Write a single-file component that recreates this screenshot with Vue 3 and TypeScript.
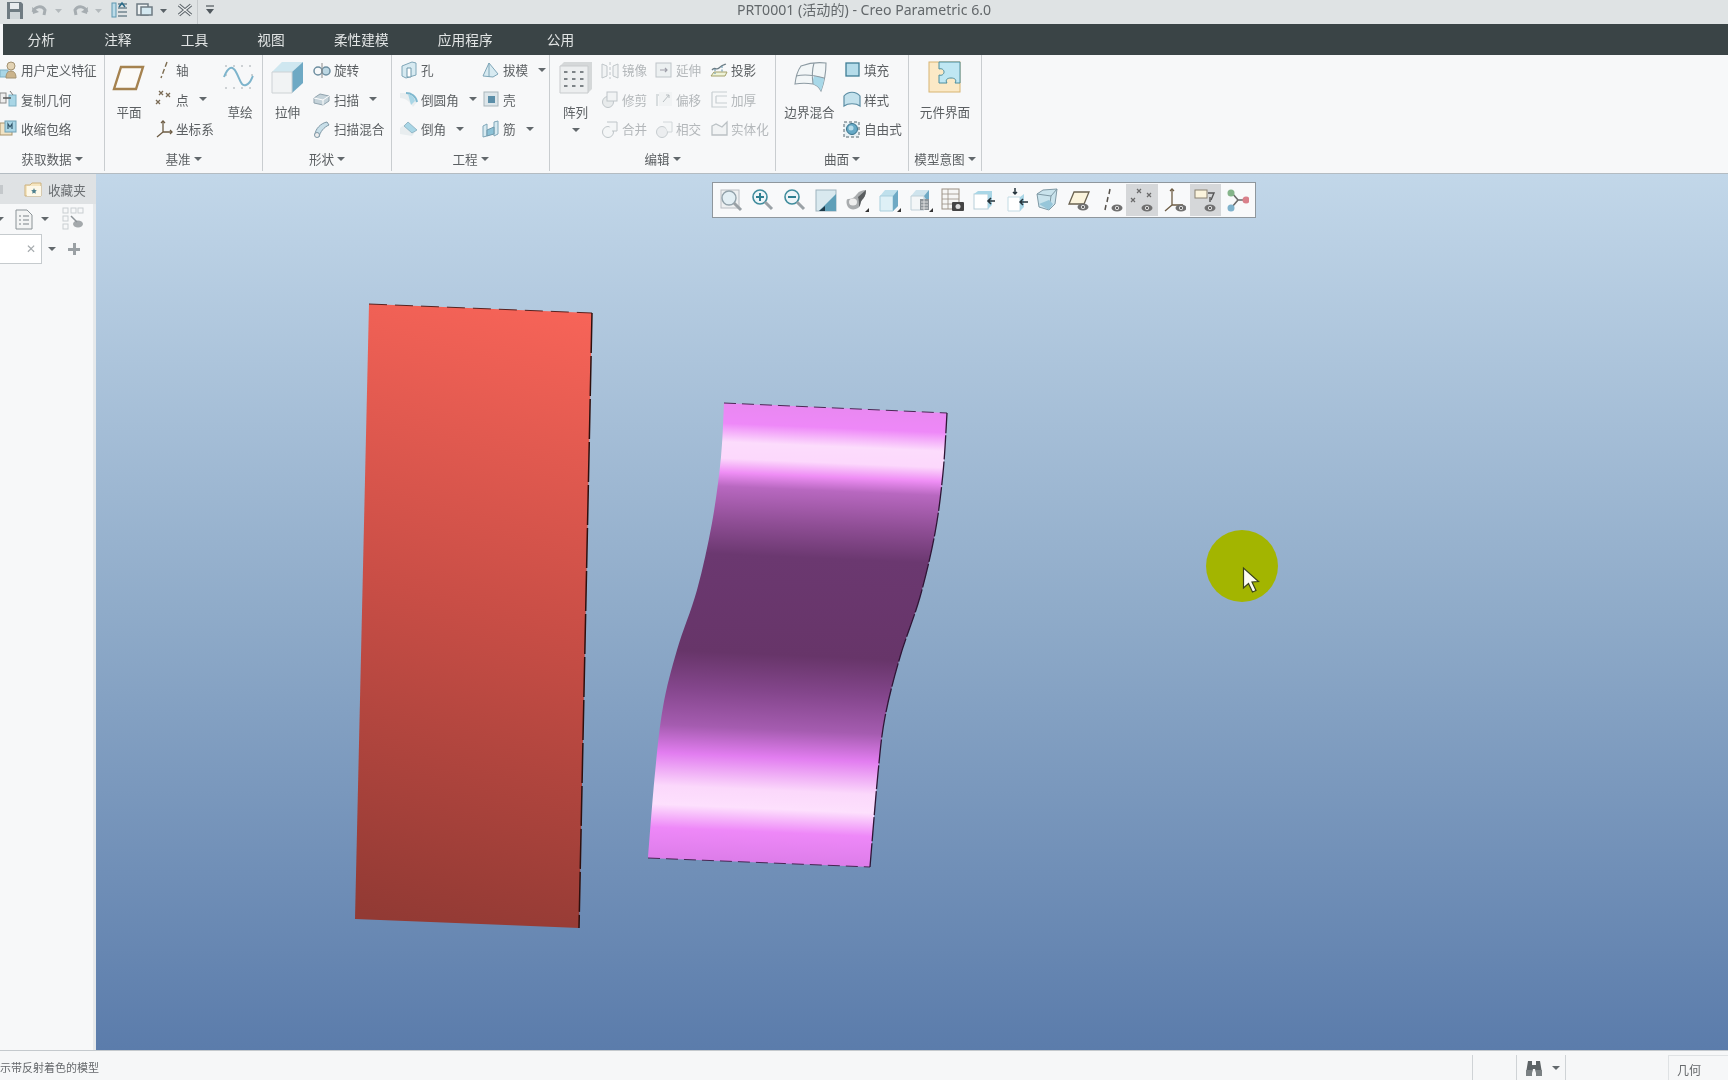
<script setup lang="ts">
interface Item {
  icon: string;
  label: string;
  caret?: boolean;
  off?: boolean;
}
interface Col {
  w: number;
  pad?: number;
  large?: Item;
  below?: boolean;
  rows?: Item[];
}
interface Group {
  label: string;
  w: number;
  cols: Col[];
}

const small: Record<string, string> = {
  user: `<rect x="0" y="9" width="8" height="7" fill="#a9d6e6" stroke="#7fb0c4"/><circle cx="11" cy="5" r="4" fill="#e3d3b4" stroke="#a39272"/><path d="M6 17c0-5 2-7 5-7s5 2 5 7z" fill="#cbb48c" stroke="#a39272"/>`,
  copy: `<rect x="0" y="3" width="6" height="10" fill="#eee" stroke="#888"/><rect x="9" y="5" width="7" height="11" fill="#a9d6e6" stroke="#7fb0c4"/><path d="M3 8h8" stroke="#555" stroke-width="1.5"/><path d="M10 1l3 4" stroke="#777"/>`,
  shrink: `<rect x="0" y="3" width="12" height="12" fill="#f1e3c4" stroke="#a8936c"/><rect x="5" y="1" width="11" height="11" fill="#a9d6e6" stroke="#6e9fb4"/><path d="M8 9V4l2 3 2-3v5" fill="none" stroke="#33566a" stroke-width="1.2"/>`,
  axis: `<path d="M12 1L6 17" stroke="#7d6c50" stroke-width="1.4" stroke-dasharray="5 2.5" fill="none"/>`,
  point: `<g stroke="#7a6b55" stroke-width="1.3"><path d="M4 1l4 4M8 1L4 5M11 3l4 4M15 3l-4 4M1 10l4 4M5 10l-4 4"/></g>`,
  csys: `<g stroke="#6d5c44" stroke-width="1.3" fill="none"><path d="M8 1v11M8 12h9M8 12l-6 5"/><path d="M6 3l2-2 2 2M15 10l2 2-2 2"/></g>`,
  revolve: `<circle cx="5" cy="10" r="4" fill="none" stroke="#6d8ea0" stroke-width="1.5"/><circle cx="13" cy="10" r="4" fill="#bcd7e3" stroke="#6d8ea0" stroke-width="1.5"/><path d="M9 2v15" stroke="#8a8a8a"/>`,
  sweep: `<path d="M1 8l6-4 9 2v5l-6 4-9-2z" fill="#c5d3da" stroke="#90a3ae"/><path d="M1 8l9 2 6-4M10 10v5" fill="none" stroke="#fff"/>`,
  sblend: `<path d="M2 15c0-6 6-12 12-13l2 3c-5 2-9 7-10 12z" fill="#c8dfe9" stroke="#7f98a6"/><ellipse cx="4" cy="15" rx="2.5" ry="2.5" fill="#eee" stroke="#7f98a6"/>`,
  hole: `<path d="M2 5l10-4 4 1v12l-10 3-4-2z" fill="#d7eaf1" stroke="#7fa6b8"/><path d="M7 7h4v9H7z" fill="#fff" stroke="#6f98ab"/>`,
  round: `<path d="M0 3h8c5 0 9 4 9 9l-4 5c-2-4-7-9-13-9z" fill="#e8edef"/><path d="M6 3c5 0 10 3 11 9" fill="none" stroke="#7fb8cf" stroke-width="2"/><path d="M8 4c4 1 6 3 7 7l-4 4" fill="#a9d6e6"/>`,
  chamfer: `<path d="M0 8l8-6 9 8-5 6-12-2z" fill="#e8edef"/><path d="M8 2l9 8-5 3-8-7z" fill="#a9d6e6" stroke="#7fa6b8" stroke-width=".7"/>`,
  draft: `<path d="M1 15l6-13 9 11-5 3z" fill="#d7eaf1" stroke="#7fa6b8"/><path d="M7 2v14" stroke="#7fa6b8"/>`,
  shell: `<rect x="2" y="2" width="14" height="14" fill="#dde6ea" stroke="#a9b6bc"/><rect x="6" y="6" width="7" height="7" fill="#5b8ea8"/>`,
  rib: `<path d="M1 6l4-2v12l-4 1zM12 2l4-1v13l-4 2z" fill="#d7eaf1" stroke="#7fa6b8"/><path d="M5 10l7-3v7l-7 2z" fill="#8cc1d6" stroke="#6f98ab"/>`,
  mirror: `<path d="M1 3l5 2v10l-5 2zM17 3l-5 2v10l5 2z" fill="#eef1f2" stroke="#9aa4a9"/><path d="M9 1v17" stroke="#9aa4a9" stroke-dasharray="3 2"/>`,
  trim: `<circle cx="7" cy="12" r="5.5" fill="#dfe3e5" stroke="#9aa4a9"/><rect x="6" y="2" width="10" height="9" fill="#eef1f2" stroke="#9aa4a9"/>`,
  merge: `<circle cx="7" cy="12" r="5.5" fill="#f3f5f6" stroke="#9aa4a9"/><path d="M6 2h10v9H11" fill="#f3f5f6" stroke="#9aa4a9"/>`,
  extend: `<rect x="1" y="2" width="15" height="14" fill="#e6ebed" stroke="#9aa4a9"/><path d="M5 9h7M10 7l2 2-2 2" fill="none" stroke="#667" stroke-width="1.2"/>`,
  offset: `<path d="M2 16V5h13" fill="none" stroke="#c4cccf" stroke-width="2"/><rect x="4" y="2" width="13" height="14" fill="#eef1f2"/><path d="M8 12l6-7M11 5h3v3" fill="none" stroke="#8d979c"/>`,
  intersect: `<circle cx="7" cy="12" r="5.5" fill="#e4e7e9" stroke="#a5aeb3"/><path d="M8 2h9v10h-4" fill="#f3f5f6" stroke="#bac2c6"/>`,
  project: `<path d="M1 15h14l2-4H4z" fill="#eef3d8" stroke="#a3a06a"/><path d="M2 9c3-4 4 1 7-2s4-3 7-4" fill="none" stroke="#6a7b84" stroke-width="1.3"/><path d="M5 8v5M12 5v7" stroke="#5b8ea8" stroke-dasharray="2 1.5"/>`,
  thicken: `<path d="M2 2h15M2 2v15h15" fill="none" stroke="#a9b3b8" stroke-width="1.2"/><path d="M6 6h11M6 6v7h11" fill="none" stroke="#a9b3b8" stroke-width="1.2"/>`,
  solidify: `<path d="M2 6l4-2 6 3 5-5v13H2z" fill="#eef1f2" stroke="#929ca1" stroke-width="1.3"/>`,
  fill: `<rect x="3" y="2" width="13" height="13" fill="#b5dcea" stroke="#3f7d96" stroke-width="1.3"/>`,
  style: `<path d="M1 16V6c4-5 12-5 16 0v10c-4-3-12-3-16 0z" fill="#c3e1ec" stroke="#5a8ca3" stroke-width="1.2"/>`,
  free: `<rect x="1" y="2" width="15" height="15" fill="#e9f1f4" stroke="#55676f" stroke-dasharray="3 2"/><circle cx="9" cy="9" r="5.5" fill="#66a9c6" stroke="#37718a"/><circle cx="8" cy="8" r="2.5" fill="#b6dcea"/>`
};

const large: Record<string, string> = {
  plane: `<path d="M9 6h22l-7 22H2z" fill="#fbfaf7" stroke="#a5824f" stroke-width="2.4"/>`,
  sketch: `<g fill="#9aa0a4"><circle cx="3" cy="5" r=".8"/><circle cx="11" cy="5" r=".8"/><circle cx="19" cy="5" r=".8"/><circle cx="27" cy="5" r=".8"/><circle cx="3" cy="14" r=".8"/><circle cx="29" cy="14" r=".8"/><circle cx="3" cy="27" r=".8"/><circle cx="11" cy="27" r=".8"/><circle cx="19" cy="27" r=".8"/><circle cx="27" cy="27" r=".8"/></g><path d="M1 16C5 6 9 4 13 11s5 15 10 13 5-6 7-9" fill="none" stroke="#7db4cc" stroke-width="2"/>`,
  extrude: `<path d="M1 11L11 1h21v21L21 32H1z" fill="#eef1f2"/><path d="M1 11L11 1h21L21 11z" fill="#cfe7f0"/><path d="M21 11L32 1v21L21 32z" fill="#6ea9c4"/><path d="M1 11h20v21H1z" fill="#f1f3f4" stroke="#cdd2d5"/>`,
  pattern: `<path d="M1 5L5 1h28v27l-4 4H1z" fill="#d5d8d9"/><path d="M1 5h28v27H1z" fill="#eceeef" stroke="#c8cbcd"/><g fill="#7d8387"><rect x="5" y="10" width="3.5" height="2"/><rect x="13" y="10" width="3.5" height="2"/><rect x="21" y="10" width="3.5" height="2"/><rect x="5" y="17" width="3.5" height="2"/><rect x="13" y="17" width="3.5" height="2"/><rect x="21" y="17" width="3.5" height="2"/><rect x="5" y="24" width="3.5" height="2"/><rect x="13" y="24" width="3.5" height="2"/><rect x="21" y="24" width="3.5" height="2"/></g>`,
  boundary: `<path d="M2 23C3 14 5 9 8 5C16 2 25 1 33 2C33 12 31 22 28 30C26 26 24 24 20 23C14 22 8 22 2 23Z" fill="#f2f6f7" stroke="#8c9aa2" stroke-width="1.1"/><path d="M21 15C24 15.500 28 16 31 17C31 22 29 26 28 30C26 26 24 24 20 23C19.500 20 20 18 21 15Z" fill="#a8d8e8"/><path d="M3 15C12 13 24 15 31 17M21 2C19 9 19 16 20 23" fill="none" stroke="#8c9aa2" stroke-width="1.1"/>`,
  iface: `<rect x="1" y="1" width="31" height="30" fill="#fbe9c6" stroke="#d7b473"/><path d="M11 1H32V22H27c2-3 0-5-4-5s-6 2-4 5H11V14c3 1 5-1 5-3s-2-4-5-3z" fill="#bfe7f3" stroke="#4d8e9e"/>`
};

const eye = `<ellipse cx="16" cy="19" rx="5.5" ry="3.5" fill="#707070"/><circle cx="16" cy="19" r="2" fill="#eee"/><circle cx="16" cy="19" r="1" fill="#333"/>`;
const corner = `<path d="M24 24h-4l4-4z" fill="#333"/>`;
const mag = (inner: string) =>
  `<circle cx="10" cy="9" r="7" fill="#eef5f8" stroke="#3f8c9c" stroke-width="1.6"/>${inner}<path d="M15 14l7 7" stroke="#9aa1a6" stroke-width="3"/>`;

const tools: { svg: string; on?: boolean }[] = [
  { svg: `<rect x="2" y="2" width="18" height="18" fill="#eef0f1" stroke="#b9bec2"/><circle cx="10" cy="10" r="7" fill="#e3eff4" stroke="#93a3ab" stroke-width="1.4"/><path d="M15 15l7 7" stroke="#9aa1a6" stroke-width="3"/>` },
  { svg: mag(`<path d="M6 9h8M10 5v8" stroke="#2e7f90" stroke-width="2"/>`) },
  { svg: mag(`<path d="M6 9h8" stroke="#2e7f90" stroke-width="2"/>`) },
  { svg: `<rect x="2" y="2" width="20" height="21" fill="#d9e9ef" stroke="#9db3bd"/><path d="M22 6v17H5z" fill="#5f9fb8"/><path d="M5 23l6-5v5z" fill="#1f3a48"/>` },
  { svg: `<path d="M3 11c4 0 7-2 9-5s6-4 9-4c0 5-2 8-4 10s-1 6-4 8-8 2-10-1-2-8 0-8z" fill="#a9acae"/><path d="M13 9l8-7c0 5-2 8-4 10s-1 5-3 7c0-4 0-7-1-10z" fill="#5a5d5f"/><ellipse cx="8" cy="14" rx="4" ry="3.500" fill="#eeeeee"/>${corner}` },
  { svg: `<path d="M3 8l5-6h13v16l-5 5H3z" fill="#bfe0ec"/><path d="M3 8h13v15H3z" fill="#def0f6" stroke="#a9cfdd"/><path d="M16 8l5-6v16l-5 5z" fill="#6ea9c4"/>${corner}` },
  { svg: `<path d="M2 8l5-6h13v14H2z" fill="#cfe4ed"/><path d="M2 8h13v14H2z" fill="#f3f6f7" stroke="#bfd0d8"/><path d="M15 8l5-6v14z" fill="#6ea9c4"/><rect x="11" y="11" width="9" height="11" fill="#8d9499"/><path d="M12 14h7M12 17h7M12 20h7M15 11v11" stroke="#eee" stroke-width=".8"/>${corner}` },
  { svg: `<rect x="2" y="1" width="17" height="20" fill="#f6f6f5" stroke="#9a9083"/><path d="M2 6h17M2 11h17M2 16h17M8 1v20" stroke="#9a9083" stroke-width=".8"/><rect x="12" y="14" width="12" height="9" rx="1" fill="#444"/><circle cx="18" cy="18.500" r="2.500" fill="#ddd"/>` },
  { svg: `<rect x="2" y="6" width="14" height="15" fill="#fff" stroke="#b7cfd9"/><path d="M2 6l4-3h14l-4 3zM16 6l4-3v14l-4 4z" fill="#a9d6e6"/><path d="M23 13h-7M19 10l-3 3 3 3" fill="none" stroke="#26343c" stroke-width="1.6"/>` },
  { svg: `<path d="M4 9h12v14H4z" fill="#fff" stroke="#c3dbe4"/><path d="M16 9l4-3v13l-4 4z" fill="#a9d6e6"/><path d="M11 0v6M9 4l2 2 2-2M24 14h-8M19 11l-3 3 3 3" fill="none" stroke="#26343c" stroke-width="1.5"/>` },
  { svg: `<path d="M2 6l6-4 14-1-2 15-6 6-10-3z" fill="#c9e3ec" stroke="#7f99a5"/><path d="M2 6l14 2 6-7M16 8l-2 14" fill="none" stroke="#7f99a5"/><path d="M4 16l10-4 4 4-4 6z" fill="#97c6d9"/>` },
  { svg: `<path d="M7 4h15l-5 12H2z" fill="#fbf4dd" stroke="#6a6250" stroke-width="1.3"/>${eye}` },
  { svg: `<path d="M11 1l-1 5M9 9l-1 5M7 17l-1 5" stroke="#55504a" stroke-width="1.5"/><g transform="translate(2,1)">${eye}</g>` },
  { on: true, svg: `<g stroke="#6a6a6a" stroke-width="1.2"><path d="M7 1l4 4M11 1L7 5M17 5l4 4M21 5l-4 4M1 10l4 4M5 10l-4 4"/></g><g transform="translate(1,1)">${eye}</g>` },
  { svg: `<g stroke="#6d5c44" stroke-width="1.3" fill="none"><path d="M10 1v16M10 17h11M10 17l-7 6"/><path d="M8 3l2-2 2 2"/></g><g transform="translate(3,1)">${eye}</g>` },
  { on: true, svg: `<rect x="2" y="2" width="12" height="8" fill="#fbf4dd" stroke="#8a8272"/><path d="M15 5h6l-3 7" fill="none" stroke="#555" stroke-width="1.4"/><path d="M17 9v5" stroke="#555" stroke-width="1.4"/><g transform="translate(1,1)">${eye}</g>` },
  { svg: `<path d="M7 5l6 7 9 0M13 12l-6 7" stroke="#6a6a6a" stroke-width="1.6" fill="none"/><circle cx="6" cy="5" r="3.500" fill="#85b48a"/><circle cx="6" cy="20" r="3.500" fill="#7fb2cc"/><circle cx="21" cy="12" r="3.500" fill="#d9808a"/>` }
];

const groups: Group[] = [
  {
    label: "获取数据",
    w: 105,
    cols: [
      {
        w: 104,
        rows: [
          { icon: "user", label: "用户定义特征" },
          { icon: "copy", label: "复制几何" },
          { icon: "shrink", label: "收缩包络" }
        ]
      }
    ]
  },
  {
    label: "基准",
    w: 158,
    cols: [
      { w: 48, large: { icon: "plane", label: "平面" } },
      {
        w: 67,
        pad: 2,
        rows: [
          { icon: "axis", label: "轴" },
          { icon: "point", label: "点", caret: true },
          { icon: "csys", label: "坐标系" }
        ]
      },
      { w: 40, large: { icon: "sketch", label: "草绘" } }
    ]
  },
  {
    label: "形状",
    w: 129,
    cols: [
      { w: 49, large: { icon: "extrude", label: "拉伸" } },
      {
        w: 79,
        pad: 1,
        rows: [
          { icon: "revolve", label: "旋转" },
          { icon: "sweep", label: "扫描", caret: true },
          { icon: "sblend", label: "扫描混合" }
        ]
      }
    ]
  },
  {
    label: "工程",
    w: 158,
    cols: [
      {
        w: 90,
        pad: 8,
        rows: [
          { icon: "hole", label: "孔" },
          { icon: "round", label: "倒圆角", caret: true },
          { icon: "chamfer", label: "倒角", caret: true }
        ]
      },
      {
        w: 67,
        rows: [
          { icon: "draft", label: "拔模", caret: true },
          { icon: "shell", label: "壳" },
          { icon: "rib", label: "筋", caret: true }
        ]
      }
    ]
  },
  {
    label: "编辑",
    w: 226,
    cols: [
      { w: 51, below: true, large: { icon: "pattern", label: "阵列" } },
      {
        w: 54,
        rows: [
          { icon: "mirror", label: "镜像", off: true },
          { icon: "trim", label: "修剪", off: true },
          { icon: "merge", label: "合并", off: true }
        ]
      },
      {
        w: 55,
        rows: [
          { icon: "extend", label: "延伸", off: true },
          { icon: "offset", label: "偏移", off: true },
          { icon: "intersect", label: "相交", off: true }
        ]
      },
      {
        w: 65,
        rows: [
          { icon: "project", label: "投影" },
          { icon: "thicken", label: "加厚", off: true },
          { icon: "solidify", label: "实体化", off: true }
        ]
      }
    ]
  },
  {
    label: "曲面",
    w: 133,
    cols: [
      { w: 67, large: { icon: "boundary", label: "边界混合" } },
      {
        w: 65,
        rows: [
          { icon: "fill", label: "填充" },
          { icon: "style", label: "样式" },
          { icon: "free", label: "自由式" }
        ]
      }
    ]
  },
  {
    label: "模型意图",
    w: 73,
    cols: [{ w: 72, large: { icon: "iface", label: "元件界面" } }]
  }
];

const menus = ["分析", "注释", "工具", "视图", "柔性建模", "应用程序", "公用"];

// edges of the curved surface, picked off the reference
type Pt = [number, number];
const leftEdge: Pt[] = [
  [724, 403], [721, 457], [712, 523], [697, 590],
  [677, 650], [663, 707], [655, 773], [648, 858]
];
const rightEdge: Pt[] = [
  [870, 867], [878, 773], [885, 717], [900, 657],
  [920, 597], [935, 533], [943, 473], [947, 413]
];

// catmull-rom through the points, as cubic segments
function curve(p: Pt[]): string {
  let d = "";
  for (let i = 0; i < p.length - 1; i++) {
    const a = p[Math.max(i - 1, 0)];
    const b = p[i];
    const c = p[i + 1];
    const e = p[Math.min(i + 2, p.length - 1)];
    const c1 = [b[0] + (c[0] - a[0]) / 6, b[1] + (c[1] - a[1]) / 6];
    const c2 = [c[0] - (e[0] - b[0]) / 6, c[1] - (e[1] - b[1]) / 6];
    d += `C${c1[0]} ${c1[1]} ${c2[0]} ${c2[1]} ${c[0]} ${c[1]}`;
  }
  return d;
}

const surface = `M724 403${curve(leftEdge)}L870 867${curve(rightEdge)}Z`;
const surfaceRight = `M870 867${curve(rightEdge)}`;
</script>

<template>
  <div class="app">
    <header class="titlebar">
      <svg class="qat" width="224" height="24" viewBox="0 0 224 24">
        <path d="M7 2h14l2 2v15H7z" fill="#6f7b82" />
        <rect x="10" y="3" width="9" height="6" fill="#e8ecee" />
        <rect x="10" y="12" width="10" height="7" fill="#cfd5d8" />
        <path d="M33 12c2-6 9-7 12-2l-1 5" fill="none" stroke="#a6adb1" stroke-width="3" />
        <path d="M32 7l1 7 6-2z" fill="#a6adb1" />
        <path d="M55 9h7l-3.500 4z" fill="#b4babd" />
        <path d="M87 12c-2-6-9-7-12-2l1 5" fill="none" stroke="#a6adb1" stroke-width="3" />
        <path d="M88 7l-1 7-6-2z" fill="#a6adb1" />
        <path d="M95 9h7l-3.500 4z" fill="#b4babd" />
        <rect x="112" y="3" width="4" height="14" fill="#bcdbe8" stroke="#5e97b0" />
        <path d="M118 4h9M118 8h9M118 12h9M118 16h9" stroke="#71858f" stroke-width="1.500" />
        <path d="M119 7l3-4 3 4" fill="none" stroke="#2a6a88" stroke-width="1.500" />
        <rect x="137" y="4" width="11" height="11" fill="#eef2f3" stroke="#6f7b82" stroke-width="1.500" />
        <rect x="141" y="7" width="11" height="8" fill="#d4e8f0" stroke="#6f7b82" stroke-width="1.500" />
        <path d="M160 9h7l-3.500 4z" fill="#5a6267" />
        <path d="M179 5l12 10M191 5l-12 10" stroke="#5f676c" stroke-width="3.500" />
        <path d="M179 5l12 10M191 5l-12 10" stroke="#eef0f1" stroke-width="1.200" />
        <path d="M197.500 0v24" stroke="#c6cacc" />
        <path d="M206 6h8" stroke="#50585d" stroke-width="1.200" />
        <path d="M206 9h8l-4 5z" fill="#50585d" />
      </svg>
      <div class="title">PRT0001 (活动的) - Creo Parametric 6.0</div>
    </header>

    <nav class="menubar">
      <span v-for="m in menus" :key="m" class="menu">{{ m }}</span>
    </nav>

    <section class="ribbon">
      <div
        v-for="g in groups"
        :key="g.label"
        class="group"
        :style="{ width: g.w + 'px' }"
      >
        <div class="group-body">
          <div
            v-for="(c, i) in g.cols"
            :key="i"
            class="col"
            :style="{ width: c.w + 'px', paddingLeft: (c.pad ?? 0) + 'px' }"
          >
            <div v-if="c.large" class="big">
              <svg class="big-icon" width="34" height="34" viewBox="0 0 34 34" v-html="large[c.large.icon]"></svg>
              <span class="big-label">{{ c.large.label }}</span>
              <i v-if="c.below" class="caret big-caret"></i>
            </div>
            <div
              v-for="r in c.rows"
              :key="r.label"
              class="row"
              :class="{ off: r.off }"
            >
              <svg class="row-icon" width="18" height="18" viewBox="0 0 18 18" v-html="small[r.icon]"></svg>
              <span>{{ r.label }}</span>
              <i v-if="r.caret" class="caret row-caret"></i>
            </div>
          </div>
        </div>
        <div class="group-label">{{ g.label }}<i class="caret"></i></div>
      </div>
    </section>

    <main class="main">
      <aside class="side">
        <div class="side-tabs">
          <i class="tab-edge"></i>
          <svg width="18" height="18" viewBox="0 0 18 18">
            <path d="M1 5h5l2-2h9v13H1z" fill="#f6e6c0" stroke="#cdb27e" />
            <rect x="3" y="6" width="14" height="10" fill="#fdf8e8" />
            <path d="M10 8l.8 2 2 .3-1.400 1.400.4 2-1.800-1-1.800 1 .4-2-1.400-1.400 2-.3z" fill="#4d7f8e" />
          </svg>
          <span>收藏夹</span>
        </div>
        <div class="side-tools">
          <i class="caret edge-caret"></i>
          <svg class="doc" width="18" height="21" viewBox="0 0 18 21">
            <path d="M1 1h11l5 5v14H1z" fill="#f3f4f4" stroke="#8a9296" />
            <path d="M4 7h2M8 7h6M4 11h2M8 11h6M4 15h2M8 15h6" stroke="#7a8287" />
          </svg>
          <i class="caret"></i>
          <svg class="tree" width="22" height="24" viewBox="0 0 22 24">
            <g fill="none" stroke="#c9ced1">
              <rect x="1" y="1" width="5" height="5" />
              <rect x="1" y="9" width="5" height="5" />
              <rect x="1" y="17" width="5" height="5" />
              <rect x="9" y="1" width="5" height="5" />
              <rect x="16" y="1" width="5" height="5" />
            </g>
            <ellipse cx="16" cy="17" rx="5" ry="3.500" fill="#a4a9ac" />
            <path d="M9 9l6 6" stroke="#8d9397" stroke-width="1.500" />
          </svg>
        </div>
        <div class="side-search">
          <div class="search-box">✕</div>
          <i class="caret"></i>
          <span class="plus"></span>
        </div>
      </aside>

      <div class="canvas">
        <svg class="scene" width="1632" height="876" viewBox="96 174 1632 876">
          <defs>
            <linearGradient id="red" gradientUnits="userSpaceOnUse" x1="590" y1="300" x2="430" y2="930">
              <stop offset="0" stop-color="#f96559" />
              <stop offset="0.5" stop-color="#c94e46" />
              <stop offset="1" stop-color="#923a34" />
            </linearGradient>
            <linearGradient id="pink" gradientUnits="userSpaceOnUse" x1="800" y1="403" x2="780" y2="870">
              <stop offset="0" stop-color="#e888f0" />
              <stop offset="0.05" stop-color="#ee88f8" />
              <stop offset="0.09" stop-color="#fcdcfc" />
              <stop offset="0.125" stop-color="#fcd8fc" />
              <stop offset="0.155" stop-color="#ef8ef5" />
              <stop offset="0.185" stop-color="#b868c0" />
              <stop offset="0.26" stop-color="#8f4e95" />
              <stop offset="0.33" stop-color="#6b3870" />
              <stop offset="0.54" stop-color="#673569" />
              <stop offset="0.62" stop-color="#84468c" />
              <stop offset="0.7" stop-color="#a55cb0" />
              <stop offset="0.76" stop-color="#e27df0" />
              <stop offset="0.83" stop-color="#fbd8fb" />
              <stop offset="0.87" stop-color="#fde0fd" />
              <stop offset="0.92" stop-color="#ee88f8" />
              <stop offset="1" stop-color="#d97ae6" />
            </linearGradient>
          </defs>

          <polygon points="369,304 592,313 579,928 355,919" fill="url(#red)" />
          <path d="M369 304L592 313" fill="none" stroke="#4a1512" stroke-width="0.900" stroke-dasharray="18 8" />
          <path d="M592 313L579 928" fill="none" stroke="#2e0f0d" stroke-width="1.500" stroke-dasharray="40 3" />

          <path :d="surface" fill="url(#pink)" />
          <path d="M724 403L947 413M648 858L870 867" fill="none" stroke="#3c1a44" stroke-width="0.900" stroke-dasharray="12 6" />
          <path :d="surfaceRight" fill="none" stroke="#2f1535" stroke-width="1.300" stroke-dasharray="24 2" />

          <circle cx="1242" cy="566" r="36" fill="#a3b500" />
          <path d="M1243.500 568v20l5-4.500 4 8.500 3.500-1.500-4-8.500 6.500-.5z" fill="#fdfdf2" stroke="#39421a" stroke-width="1.200" />
        </svg>

        <div class="view-bar">
          <span v-for="(t, i) in tools" :key="i" class="tool" :class="{ on: t.on }">
            <svg width="24" height="24" viewBox="0 0 24 24" v-html="t.svg"></svg>
          </span>
        </div>
      </div>
    </main>

    <footer class="statusbar">
      <span class="status-msg">示带反射着色的模型</span>
      <div class="status-right">
        <span class="status-gap"></span>
        <span class="status-find">
          <svg width="18" height="18" viewBox="0 0 18 18">
            <path d="M3 2h4v4h4V2h4l2 12h-6l-1-4H8l-1 4H1z" fill="#5d6366" />
            <rect x="1" y="11" width="6" height="6" fill="#7b8184" />
            <rect x="11" y="11" width="6" height="6" fill="#7b8184" />
          </svg>
          <i class="caret"></i>
        </span>
        <span class="status-filter">几何</span>
      </div>
    </footer>
  </div>
</template>

<style scoped>
.app {
  width: 1728px;
  height: 1080px;
  display: flex;
  flex-direction: column;
  overflow: hidden;
  font-family: "Noto Sans", "Noto Sans CJK SC", sans-serif;
  font-size: 12.6px;
  color: #5b5f62;
  background: #f6f7f8;
  filter: blur(0.35px);
}

.caret {
  display: inline-block;
  flex: none;
  width: 0;
  height: 0;
  border-left: 4px solid transparent;
  border-right: 4px solid transparent;
  border-top: 4px solid #62686c;
}

.titlebar {
  height: 24px;
  flex: none;
  display: grid;
  grid-template-columns: 1fr auto 1fr;
  align-items: center;
  background: #dfe3e4;
}

.qat {
  display: block;
}

.title {
  font-size: 14.1px;
  line-height: 20px;
  margin-top: -4px;
  color: #63686b;
  white-space: nowrap;
}

.menubar {
  height: 31px;
  flex: none;
  box-sizing: border-box;
  margin-left: 3px;
  padding-bottom: 2px;
  display: flex;
  align-items: center;
  background: #3a4446;
}

.menu {
  padding: 0 24.6px;
  font-size: 13.7px;
  color: #e2e5e5;
}

.menu:last-child {
  margin-left: 5px;
}

.ribbon {
  height: 119px;
  flex: none;
  display: flex;
  background: #f7f8f9;
  border-bottom: 1px solid #b4bcc2;
  box-sizing: border-box;
}

.group {
  flex: none;
  box-sizing: border-box;
  display: flex;
  flex-direction: column;
  border-right: 1px solid #c9cdd0;
  margin-bottom: 2px;
}

.group-body {
  height: 89px;
  display: flex;
}

.col {
  flex: none;
  box-sizing: border-box;
}

.row {
  height: 29.5px;
  display: flex;
  align-items: center;
  gap: 3px;
  white-space: nowrap;
}

.row.off {
  color: #b3b7ba;
}

.row.off .row-icon {
  opacity: 0.6;
}

.row-icon {
  flex: none;
}

.row-caret {
  margin-left: 7px;
}

.big {
  display: flex;
  flex-direction: column;
  align-items: center;
}

.big-icon {
  margin-top: 6px;
  margin-bottom: 5px;
}

.big-label {
  line-height: 26px;
  white-space: nowrap;
}

.big-caret {
  margin-top: 2px;
}

.group-label {
  flex: 1;
  display: flex;
  align-items: center;
  justify-content: center;
  gap: 3px;
  padding-top: 2px;
  white-space: nowrap;
}

.main {
  flex: 1;
  min-height: 0;
  display: flex;
}

.side {
  width: 96px;
  flex: none;
  background: #f7f8f9;
  border-right: 3px solid #e6e9eb;
  box-sizing: border-box;
}

.side-tabs {
  height: 30px;
  margin-right: -3px;
  display: flex;
  align-items: center;
  gap: 6px;
  background: #dfe2e4;
  color: #6b6f72;
}

.tab-edge {
  width: 3px;
  height: 9px;
  margin-right: 15px;
  background: #c4c8cb;
}

.side-tools {
  height: 30px;
  display: flex;
  align-items: center;
  gap: 8px;
}

.edge-caret {
  margin-left: -4px;
}

.doc {
  margin-left: 3px;
}

.tree {
  margin-left: 5px;
}

.side-search {
  height: 30px;
  display: flex;
  align-items: center;
  gap: 6px;
}

.search-box {
  width: 42px;
  height: 30px;
  box-sizing: border-box;
  padding-right: 5px;
  text-align: right;
  line-height: 28px;
  font-size: 12px;
  color: #a5aaad;
  background: #fff;
  border: 1px solid #c6cbce;
  border-left: none;
}

.plus {
  width: 12px;
  height: 12px;
  margin-left: 6px;
  background:
    linear-gradient(#9aa0a4, #9aa0a4) center / 12px 3px no-repeat,
    linear-gradient(#9aa0a4, #9aa0a4) center / 3px 12px no-repeat;
}

.canvas {
  flex: 1;
  position: relative;
  background: linear-gradient(#c2d7e9, #8fabc9 50%, #5b7cab);
  overflow: hidden;
}

.scene {
  position: absolute;
  left: 0;
  top: 0;
}

.view-bar {
  position: absolute;
  left: 616px;
  top: 8px;
  width: 544px;
  height: 36px;
  box-sizing: border-box;
  display: flex;
  align-items: center;
  padding: 0 2px;
  background: #f8f9fa;
  border: 1px solid #8f979d;
}

.tool {
  flex: 1;
  height: 32px;
  display: flex;
  align-items: center;
  justify-content: center;
}

.tool.on {
  background: #d5d7d9;
}

.statusbar {
  height: 30px;
  flex: none;
  box-sizing: border-box;
  display: flex;
  align-items: center;
  justify-content: space-between;
  border-top: 1px solid #c4c9cd;
  background: #f6f7f8;
  font-size: 11px;
  color: #66696c;
}

.status-msg {
  margin-top: 3px;
}

.status-right {
  height: 100%;
  display: flex;
  font-size: 12px;
}

.status-gap {
  width: 43px;
  margin-top: 4px;
  border-left: 1px solid #cfd3d6;
}

.status-find {
  width: 50px;
  box-sizing: border-box;
  margin-top: 4px;
  margin-right: 102px;
  padding-left: 8px;
  display: flex;
  align-items: center;
  gap: 9px;
  border-left: 1px solid #cfd3d6;
  border-right: 1px solid #cfd3d6;
}

.status-filter {
  width: 60px;
  box-sizing: border-box;
  margin-top: 4px;
  padding: 3px 0 0 8px;
  display: flex;
  align-items: center;
  border-left: 1px solid #dfe2e4;
  border-top: 1px solid #dfe2e4;
}
</style>

<style>
html,
body {
  margin: 0;
  background: #f6f7f8;
}
</style>
